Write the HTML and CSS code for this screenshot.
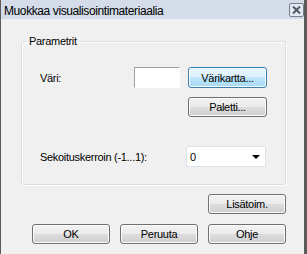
FILE: index.html
```html
<!DOCTYPE html>
<html lang="fi">
<head>
    <meta charset="UTF-8">
    <title>Muokkaa visualisointimateriaalia</title>
    <link rel="stylesheet" href="styles.css">
</head>
<body>
    <div id="win">
        <div class="titlebar">
            <span class="title">Muokkaa visualisointimateriaalia</span>
            <span class="close">
                <svg width="9" height="8" viewBox="0 0 9 8"><path d="M1 0.5 L8 7.5 M8 0.5 L1 7.5" stroke="#4d5968" stroke-width="2" fill="none"/></svg>
            </span>
        </div>
        <div class="content">
            <fieldset class="group">
                <legend>Parametrit</legend>
                <div class="row">
                    <span class="lbl">Väri:</span>
                    <span class="swatch"></span>
                    <button class="btn default">Värikartta...</button>
                </div>
                <div class="row row2">
                    <button class="btn">Paletti...</button>
                </div>
                <div class="row row3">
                    <span class="lbl lbl-wide">Sekoituskerroin (-1...1):</span>
                    <span class="combo">
                        <span class="val">0</span>
                        <span class="arrow"></span>
                    </span>
                </div>
            </fieldset>
            <div class="extra">
                <button class="btn">Lisätoim.</button>
            </div>
            <div class="actions">
                <button class="btn">OK</button>
                <button class="btn">Peruuta</button>
                <button class="btn">Ohje</button>
            </div>
        </div>
    </div>
</body>
</html>
```

FILE: styles.css
```css
*{margin: 0;padding: 0;box-sizing: border-box;}
html,body{width: 307px;height: 254px;overflow: hidden;background: #f0f0f0;}
body{font-size: 11px;font-family: "Liberation Sans", Arial, sans-serif;color: #000;letter-spacing: -0.3px;}
#win{width: 307px;height: 254px;border-left: 1px solid #5b5b5b;border-right: 3px solid #5b5b5b;background: #f0f0f0;display: flex;flex-direction: column;}
.titlebar{height: 19px;background: #d3dce8;display: flex;align-items: center;justify-content: space-between;padding: 0 0 0 3px;}
.title{font-size: 12px;letter-spacing: -0.4px;color: #000;padding-top: 2px;}
.close{width: 15px;height: 14px;margin: 1px 0 0 0;border: 1px solid #77818d;border-radius: 2px;background: #e4eaf1;display: flex;align-items: center;justify-content: center;}
.content{padding: 16px 18px 0 20px;}
.group{border: 1px solid #d5dfe5;border-radius: 3px;box-shadow: 1px 1px 0 #fff, inset 1px 1px 0 #fff;padding: 19px 0 0 18px;height: 150px;}
.group legend{margin-left: -13px;padding: 0 2px;line-height: 13px;}
.row{display: flex;align-items: center;height: 21px;}
.lbl{width: 94px;}
.lbl-wide{width: 146px;}
.swatch{width: 46px;height: 21px;background: #fff;border: 1px solid #fff;border-top-color: #a0a0a0;border-left-color: #a0a0a0;margin-right: 8px;}
.btn{width: 79px;height: 21px;font: inherit;letter-spacing: inherit;color: #000;border: 1px solid #707070;border-radius: 3px;background: linear-gradient(#f2f2f2 0, #ebebeb 50%, #dddddd 50%, #cfcfcf 100%);box-shadow: inset 0 0 0 1px #fcfcfc;}
.btn.default{border-color: #3c7fb1;background: linear-gradient(#eaf6fd 0, #d9f0fc 50%, #bee6fd 50%, #a7d9f5 100%);}
.row2{margin: 9px 0 0 148px;height: 20px;}
.row2 .btn{height: 20px;}
.row3{margin-top: 29px;}
.combo{width: 80px;height: 21px;background: #fff;border: 1px solid #dde3ea;display: flex;align-items: center;justify-content: space-between;padding: 0 5px 0 3px;}
.arrow{width: 0;height: 0;border-left: 4px solid transparent;border-right: 4px solid transparent;border-top: 4px solid #000;}
.extra{display: flex;justify-content: flex-end;margin-top: 9px;}
.extra .btn{width: 78px;height: 20px;}
.actions{display: flex;justify-content: flex-end;gap: 10px;margin-top: 10px;}
.actions .btn{width: 78px;height: 20px;}
```
